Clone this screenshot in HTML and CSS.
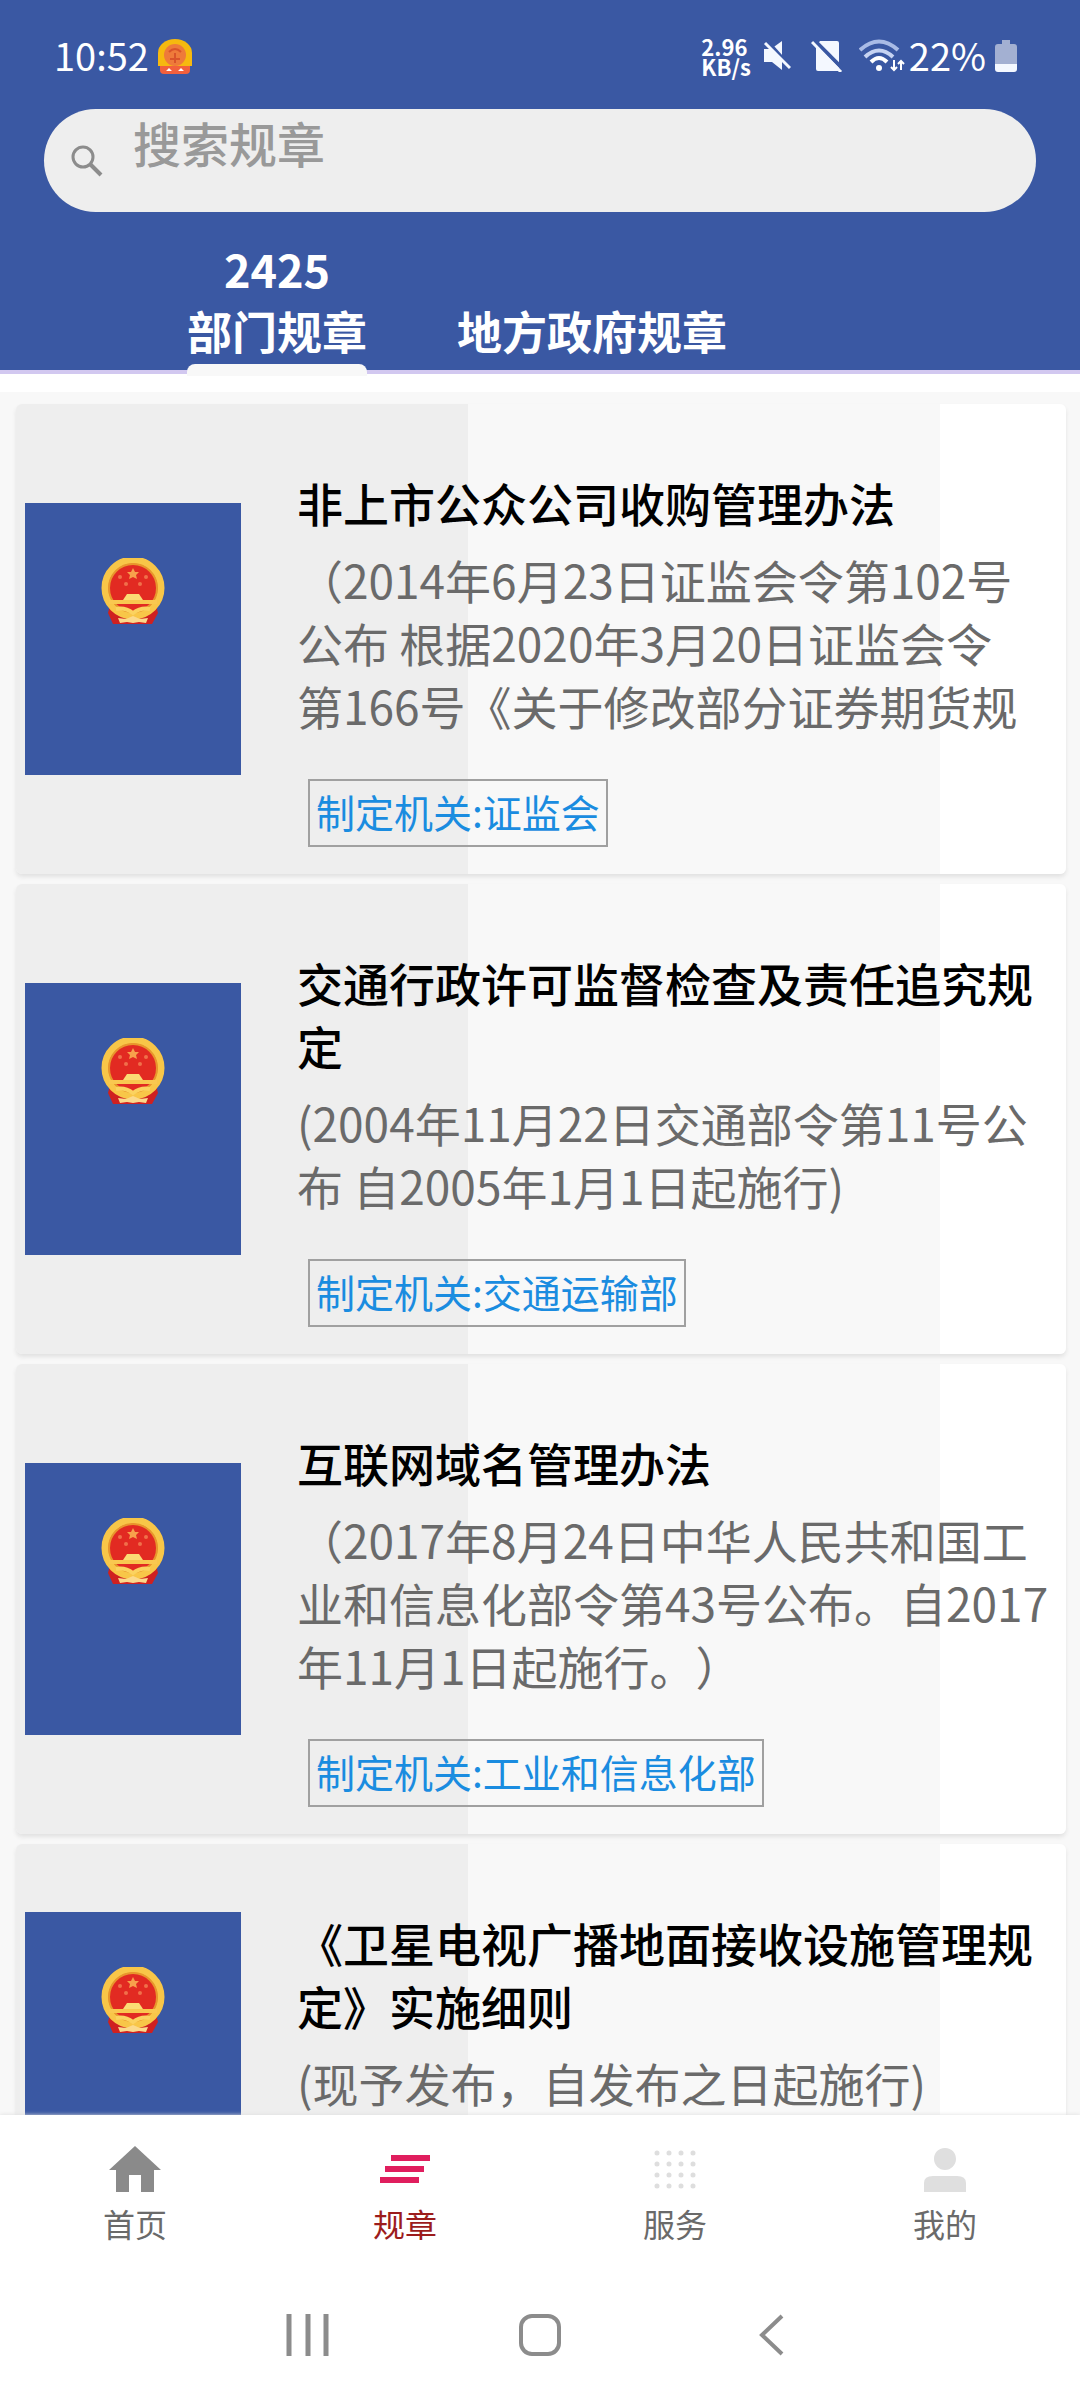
FILE: index.html
```html
<!DOCTYPE html>
<html lang="zh-CN">
<head>
<meta charset="utf-8">
<meta name="viewport" content="width=device-width, initial-scale=1">
<title>规章</title>
<link rel="stylesheet" href="styles.css">
</head>
<body>
<svg class="defs" width="0" height="0" aria-hidden="true">
  <symbol id="emblem" viewBox="0 0 64 66">
    <path d="M9 47 L55 47 L57 55 L51 66 H12 L7 55 Z" fill="#cf2020"/>
    <circle cx="32" cy="30" r="28" fill="#e22a22" stroke="#f8c648" stroke-width="7"/>
    <circle cx="32" cy="30" r="24" fill="none" stroke="#e8962c" stroke-width="2"/>
    <path d="M32 10 l2 4 4 0 -3 3 1 4 -4 -2 -4 2 1 -4 -3 -3 4 0z" fill="#f7a04c"/>
    <g fill="#f0704a"><circle cx="19" cy="19" r="2"/><circle cx="45" cy="19" r="2"/><circle cx="25" cy="26" r="2"/><circle cx="39" cy="26" r="2"/></g>
    <path d="M26 36 H38 L42 42 H22 Z" fill="#fbdc74"/>
    <path d="M8 42 H56 V46 H8 Z" fill="#f9c850"/>
    <path d="M15 51 Q24 49 32 55 Q40 49 49 51" fill="none" stroke="#fbd260" stroke-width="4"/>
    <path d="M17 60 l8 1 7 -3 7 3 8 -1 -2 5 -7 -1 -6 1 -6 -1 -7 1z" fill="#fbd98c"/>
  </symbol>
</svg>

<div class="app">
  <header class="header">
    <div class="status">
      <span class="time">10:52</span>
      <svg class="status-emblem" viewBox="0 0 36 36" aria-hidden="true">
        <rect x="3" y="24" width="30" height="12" rx="4" fill="#f2603c"/>
        <path d="M1 28 V15 A17 14 0 0 1 35 15 V28 Z" fill="#f6b90f"/>
        <circle cx="18" cy="17" r="11" fill="#ee7a3a"/>
        <path d="M12 14 Q18 8 24 14 M13 21 H23 M18 15 V25" fill="none" stroke="#d9532a" stroke-width="2"/>
        <path d="M9 33 l3 -3 3 3z M21 33 l3 -3 3 3z" fill="#fff"/>
      </svg>
      <span class="speed">2.96<br>KB/s</span>
      <svg class="mute" viewBox="0 0 28 32" aria-hidden="true">
        <path d="M1 9 H8 L19 1 V30 L9 22 H1 Z" fill="#f4f8ff"/>
        <path d="M3 0 L28 28" stroke="#3a58a3" stroke-width="4"/>
        <path d="M2 3 L27 28" stroke="#f4f8ff" stroke-width="3"/>
      </svg>
      <svg class="nosim" viewBox="0 0 32 32" aria-hidden="true">
        <path d="M9 1 H26 Q28 1 28 3 V31 H7 Q5 31 5 29 V6 Z" fill="#f4f8ff"/>
        <path d="M3 0 L32 29" stroke="#3a58a3" stroke-width="4"/>
        <path d="M1 2 L30 32" stroke="#f4f8ff" stroke-width="3"/>
      </svg>
      <svg class="wifi" viewBox="0 0 46 34" aria-hidden="true">
        <g fill="none" stroke-width="4">
          <path d="M1 11 Q20 -6 39 11" stroke="#a9bbe6"/>
          <path d="M6 18 Q20 5 34 18" stroke="#c6d3f2"/>
          <path d="M12 23 Q20 15 28 23" stroke="#fff"/>
        </g>
        <circle cx="20" cy="29" r="3" fill="#fff"/>
        <path d="M35 21 V31 M32 28 L35 31 L38 28 M42 31 V22 M39 25 L42 22 L45 25" fill="none" stroke="#fff" stroke-width="2"/>
      </svg>
      <span class="percent">22%</span>
      <svg class="battery" viewBox="0 0 24 32" aria-hidden="true">
        <path d="M8 0 H16 V4 H20 Q23 4 23 7 V25 H1 V7 Q1 4 4 4 H8 Z" fill="#a3b0d2"/>
        <path d="M1 24 H23 V29 Q23 32 20 32 H4 Q1 32 1 29 Z" fill="#f4f8ff"/>
      </svg>
    </div>

    <label class="search">
      <svg class="search-icon" viewBox="0 0 32 32" aria-hidden="true">
        <circle cx="12" cy="12" r="10" fill="none" stroke="#8c8c8c" stroke-width="3"/>
        <path d="M19 19 L30 30" stroke="#8c8c8c" stroke-width="4"/>
      </svg>
      <input class="search-input" type="text" placeholder="搜索规章" aria-label="搜索规章">
    </label>

    <div class="tabs">
      <button class="tab tab-active" type="button"><span>2425</span><span>部门规章</span></button>
      <button class="tab" type="button"><span>地方政府规章</span></button>
    </div>
  </header>

  <main class="list">
    <article class="card">
      <div class="cover"><svg class="emblem" aria-hidden="true"><use href="#emblem"/></svg></div>
      <div class="content">
        <h2 class="title">非上市公众公司收购管理办法</h2>
        <p class="desc">（2014年6月23日证监会令第102号<br>公布 根据2020年3月20日证监会令<br>第166号《关于修改部分证券期货规</p>
        <span class="tag">制定机关:证监会</span>
      </div>
    </article>
    <article class="card">
      <div class="cover"><svg class="emblem" aria-hidden="true"><use href="#emblem"/></svg></div>
      <div class="content">
        <h2 class="title">交通行政许可监督检查及责任追究规定</h2>
        <p class="desc">(2004年11月22日交通部令第11号公<br>布 自2005年1月1日起施行)</p>
        <span class="tag">制定机关:交通运输部</span>
      </div>
    </article>
    <article class="card">
      <div class="cover"><svg class="emblem" aria-hidden="true"><use href="#emblem"/></svg></div>
      <div class="content">
        <h2 class="title">互联网域名管理办法</h2>
        <p class="desc">（2017年8月24日中华人民共和国工<br>业和信息化部令第43号公布。自2017<br>年11月1日起施行。）</p>
        <span class="tag">制定机关:工业和信息化部</span>
      </div>
    </article>
    <article class="card">
      <div class="cover"><svg class="emblem" aria-hidden="true"><use href="#emblem"/></svg></div>
      <div class="content">
        <h2 class="title">《卫星电视广播地面接收设施管理规定》实施细则</h2>
        <p class="desc">(现予发布，自发布之日起施行)</p>
      </div>
    </article>
  </main>

  <nav class="nav">
    <a class="nav-item" href="#home">
      <svg class="nav-icon" viewBox="0 0 54 48" aria-hidden="true"><path d="M27 1 L53 25 H46 V47 H33 V30 H21 V47 H8 V25 H1 Z" fill="#8a8a8a"/></svg>
      <span>首页</span>
    </a>
    <a class="nav-item nav-active" href="#rules" aria-current="page">
      <svg class="nav-icon" viewBox="0 0 54 48" aria-hidden="true"><g fill="#e01e5e"><rect x="13" y="10" width="39" height="6"/><rect x="7" y="21" width="39" height="6"/><rect x="2" y="32" width="39" height="6"/></g></svg>
      <span>规章</span>
    </a>
    <a class="nav-item" href="#service">
      <svg class="nav-icon" viewBox="0 0 54 48" aria-hidden="true"><g fill="none" stroke="#dedede" stroke-linecap="round" stroke-width="5" stroke-dasharray="0 12"><path d="M9 8 H46"/><path d="M9 19 H46"/><path d="M9 30 H46"/><path d="M9 41 H46"/></g></svg>
      <span>服务</span>
    </a>
    <a class="nav-item" href="#me">
      <svg class="nav-icon" viewBox="0 0 54 48" aria-hidden="true"><path d="M27 3 C34 3 38 8 38 14 C38 20 33 25 27 25 C21 25 16 20 16 14 C16 8 20 3 27 3 Z M6 47 V38 Q6 31 15 31 H39 Q48 31 48 38 V47 Z" fill="#dfdfdf"/></svg>
      <span>我的</span>
    </a>
  </nav>

  <div class="system">
    <button class="sys-button" type="button" aria-label="最近任务"><svg viewBox="0 0 44 44"><path d="M3 1 V43 M22 1 V43 M40 1 V43" fill="none" stroke="#8c8c8c" stroke-width="5"/></svg></button>
    <button class="sys-button" type="button" aria-label="主屏幕"><svg viewBox="0 0 44 44"><rect x="3" y="3" width="38" height="38" rx="11" fill="none" stroke="#8c8c8c" stroke-width="4"/></svg></button>
    <button class="sys-button" type="button" aria-label="返回"><svg viewBox="0 0 44 44"><path d="M32 3 L12 22 L32 41" fill="none" stroke="#8c8c8c" stroke-width="4"/></svg></button>
  </div>
</div>
</body>
</html>
```

FILE: styles.css
```css
* {
  box-sizing: border-box;
}

body {
  margin: 0;
  background: #fff;
  color: #000;
  font-family: "Noto Sans CJK SC", sans-serif;
  font-weight: 400;
  text-spacing-trim: space-all;
}

button,
input {
  margin: 0;
  padding: 0;
  border: 0;
  background: none;
  color: inherit;
  font: inherit;
}

svg {
  display: block;
}

.defs {
  position: absolute;
}

.app {
  display: flex;
  flex-direction: column;
  height: 100vh;
}

/* header */
.header {
  background: #3a58a3;
  background-clip: padding-box;
  border-bottom: 4px solid #d2c8f0;
  color: #fff;
}

.status {
  display: flex;
  align-items: center;
  height: 109px;
  padding: 2px 62px 0 54px;
}

.time,
.percent {
  padding-bottom: 2px;
  font-size: 38px;
  line-height: 48px;
}

.status-emblem {
  width: 36px;
  height: 36px;
  margin-left: 8px;
}

.speed {
  margin-left: auto;
  font-size: 22px;
  font-weight: 700;
  line-height: 20px;
}

.mute {
  width: 28px;
  height: 32px;
  margin-left: 12px;
}

.nosim {
  width: 32px;
  height: 32px;
  margin-left: 20px;
}

.wifi {
  width: 46px;
  height: 34px;
  margin: 0 4px 0 16px;
}

.battery {
  width: 24px;
  height: 32px;
  margin-left: 8px;
}

.search {
  display: flex;
  align-items: center;
  height: 103px;
  margin: 0 44px;
  padding-left: 27px;
  border-radius: 52px;
  background: #eee;
}

.search-icon {
  flex: none;
  width: 32px;
  height: 32px;
}

.search-input {
  flex: 1;
  height: 64px;
  margin: 0 40px 38px 30px;
  outline: 0;
  color: #333;
  font-size: 48px;
  font-weight: 500;
}

.search-input::placeholder {
  color: #999;
  opacity: 1;
}

.tabs {
  display: flex;
  align-items: flex-end;
  gap: 90px;
  margin: 26px 0 -6px;
  padding-left: 187px;
}

.tab {
  display: flex;
  flex-direction: column;
  align-items: center;
  border-bottom: 14px solid transparent;
  font-size: 45px;
  font-weight: 700;
  line-height: 62px;
}

.tab-active::after {
  content: "";
  width: 100%;
  height: 12px;
  margin: 2px 0 -14px;
  border-radius: 8px 8px 0 0;
  background: #f8f8f8;
}

/* list */
.list {
  display: flex;
  flex: 1;
  flex-direction: column;
  gap: 10px;
  min-height: 0;
  overflow: hidden;
  margin-top: 18px;
  padding: 12px 14px 0 16px;
  background: #f8f8f8;
}

.card {
  display: flex;
  flex: none;
  align-items: center;
  gap: 56px;
  padding: 67px 14px 27px 9px;
  border-radius: 6px;
  background: linear-gradient(90deg, #eee 0 43%, #f8f8f8 43% 88%, #fff 88%);
  box-shadow: 0 3px 4px #e2e2e2;
}

.cover {
  flex: none;
  width: 216px;
  height: 272px;
  margin-top: -40px;
  padding-top: 55px;
  background: #3a58a3;
}

.emblem {
  width: 64px;
  height: 66px;
  margin: 0 auto;
}

.content {
  flex: 1;
  min-width: 0;
  min-height: 313px;
}

.title,
.desc {
  margin: 0;
  font-size: 46px;
  line-height: 63px;
}

.title {
  font-weight: 500;
}

.desc {
  margin: 14px 0 42px;
  color: #6a6a6a;
}

.tag {
  display: block;
  width: fit-content;
  margin-left: 11px;
  padding: 0 6px 4px;
  border: 2px solid #a0a0a0;
  color: #1a8ce0;
  font-size: 39px;
  line-height: 60px;
}

/* bottom navigation */
.nav {
  z-index: 1;
  display: grid;
  grid-template-columns: repeat(4, 1fr);
  flex: none;
  padding: 30px 0 27px;
  background: #fff;
  box-shadow: 0 0 4px #ddd;
}

.nav-item {
  display: flex;
  flex-direction: column;
  align-items: center;
  gap: 10px;
  color: #6a6a6a;
  font-size: 32px;
  line-height: 40px;
  text-decoration: none;
}

.nav-icon {
  width: 54px;
  height: 48px;
}

.nav-active {
  color: #9c1c1c;
}

.system {
  z-index: 2;
  display: flex;
  flex: none;
  align-items: center;
  justify-content: center;
  gap: 188px;
  height: 130px;
  background: #fff;
}

.sys-button {
  width: 44px;
  height: 44px;
}
```
